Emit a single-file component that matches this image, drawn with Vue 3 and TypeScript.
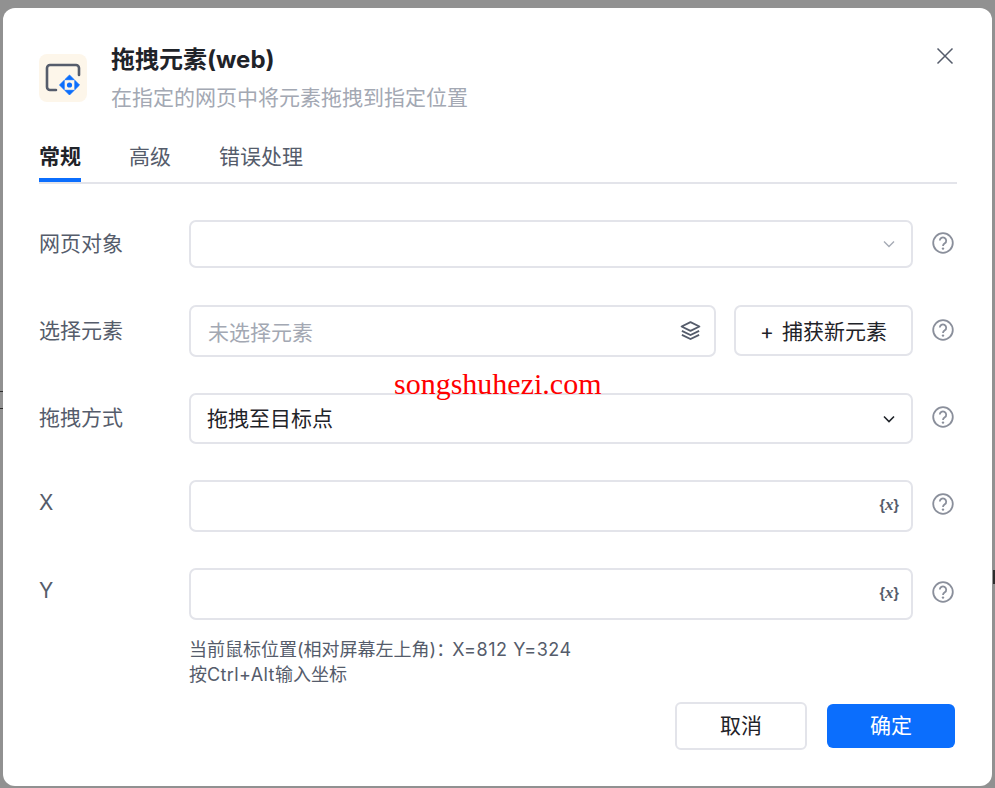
<script setup lang="ts">
import {ref} from 'vue';

// Вкладки диалога
const tabs = ['常规', '高级', '错误处理'];
const activeTab = ref(0);
</script>

<template>
  <div class="page">
    <!-- Обрывки страницы под затемнением -->
    <span class="under under-left"></span>
    <span class="under under-right"></span>

    <div class="dialog">
      <header class="head">
        <div class="logo">
          <svg width="48" height="48" viewBox="0 0 48 48">
            <path d="M17 36h-6a3 3 0 0 1-3-3V14a3 3 0 0 1 3-3h26a3 3 0 0 1 3 3v7" fill="none" stroke="#555c6b" stroke-width="2.6" stroke-linecap="round"/>
            <path d="M30.500 21l4.700 4.700h-9.400zM30.500 41l-4.700-4.700h9.400zM20.500 31l4.700-4.700v9.400zM40.500 31l-4.700 4.700v-9.400z" fill="#0b6efd" stroke="#0b6efd" stroke-width="0.8" stroke-linejoin="round"/>
            <circle cx="30.500" cy="31" r="2.600" fill="#0b6efd"/>
          </svg>
        </div>
        <div class="head-text">
          <div class="title">拖拽元素(web)</div>
          <div class="subtitle">在指定的网页中将元素拖拽到指定位置</div>
        </div>
        <svg class="close" width="18" height="18" viewBox="0 0 18 18">
          <path d="M1.500 1.500l15 15M16.500 1.500l-15 15" stroke="#555c6b" stroke-width="1.500" fill="none"/>
        </svg>
      </header>

      <nav class="tabs">
        <span
            v-for="(tab, i) in tabs"
            :key="tab"
            class="tab"
            :class="{active: i === activeTab}"
            @click="activeTab = i"
        >{{ tab }}</span>
      </nav>

      <div class="form">
        <div class="row row-1">
          <label class="label label-low">网页对象</label>
          <div class="field field-48">
            <svg class="chevron" width="12" height="8" viewBox="0 0 12 8">
              <path d="M1 1.500l5 5 5-5" stroke="#a6abb5" stroke-width="1.400" fill="none"/>
            </svg>
          </div>
          <svg class="help" width="24" height="24" viewBox="0 0 24 24">
            <circle cx="12" cy="12" r="9.800" fill="none" stroke="#8a8f9b" stroke-width="1.800"/>
            <path d="M8.800 9.600a3.200 3.200 0 1 1 5 2.700c-1.200.8-1.800 1.300-1.800 2.600" fill="none" stroke="#8a8f9b" stroke-width="1.800"/>
            <circle cx="12" cy="17.600" r="1.200" fill="#8a8f9b"/>
          </svg>
        </div>

        <div class="row row-2">
          <label class="label label-low">选择元素</label>
          <div class="field field-52 field-select">
            <span class="placeholder">未选择元素</span>
            <svg class="layers" width="21" height="21" viewBox="0 0 20 20">
              <path d="M10 2l8.500 4.200L10 10.400 1.500 6.200z" fill="none" stroke="#555c6b" stroke-width="1.700" stroke-linejoin="round"/>
              <path d="M1.800 10.400l8.200 4 8.200-4M1.800 14.200l8.200 4 8.200-4" fill="none" stroke="#555c6b" stroke-width="1.700"/>
            </svg>
          </div>
          <button class="btn-capture">+ 捕获新元素</button>
          <svg class="help" width="24" height="24" viewBox="0 0 24 24">
            <circle cx="12" cy="12" r="9.800" fill="none" stroke="#8a8f9b" stroke-width="1.800"/>
            <path d="M8.800 9.600a3.200 3.200 0 1 1 5 2.700c-1.200.8-1.800 1.300-1.800 2.600" fill="none" stroke="#8a8f9b" stroke-width="1.800"/>
            <circle cx="12" cy="17.600" r="1.200" fill="#8a8f9b"/>
          </svg>
        </div>

        <div class="row row-3">
          <label class="label">拖拽方式</label>
          <div class="field field-51">
            <span class="value">拖拽至目标点</span>
            <svg class="chevron" width="12" height="8" viewBox="0 0 12 8">
              <path d="M1 1.500l5 5 5-5" stroke="#1f2329" stroke-width="1.600" fill="none"/>
            </svg>
          </div>
          <svg class="help" width="24" height="24" viewBox="0 0 24 24">
            <circle cx="12" cy="12" r="9.800" fill="none" stroke="#8a8f9b" stroke-width="1.800"/>
            <path d="M8.800 9.600a3.200 3.200 0 1 1 5 2.700c-1.200.8-1.800 1.300-1.800 2.600" fill="none" stroke="#8a8f9b" stroke-width="1.800"/>
            <circle cx="12" cy="17.600" r="1.200" fill="#8a8f9b"/>
          </svg>
        </div>

        <div v-for="axis in ['X', 'Y']" :key="axis" class="row row-axis">
          <label class="label label-axis">{{ axis }}</label>
          <div class="field field-52">
            <span class="var-mark">{<i>x</i>}</span>
          </div>
          <svg class="help help-axis" width="24" height="24" viewBox="0 0 24 24">
            <circle cx="12" cy="12" r="9.800" fill="none" stroke="#8a8f9b" stroke-width="1.800"/>
            <path d="M8.800 9.600a3.200 3.200 0 1 1 5 2.700c-1.200.8-1.800 1.300-1.800 2.600" fill="none" stroke="#8a8f9b" stroke-width="1.800"/>
            <circle cx="12" cy="17.600" r="1.200" fill="#8a8f9b"/>
          </svg>
        </div>

        <div class="hint">
          <div>当前鼠标位置(相对屏幕左上角)：<span class="coords">X=812 Y=324</span></div>
          <div>按<span class="keys">Ctrl+Alt</span>输入坐标</div>
        </div>
      </div>

      <footer class="foot">
        <button class="btn btn-cancel">取消</button>
        <button class="btn btn-ok">确定</button>
      </footer>

      <div class="watermark">songshuhezi.com</div>
    </div>
  </div>
</template>

<style>
html,
body {
  margin: 0;
  background: #919191;
}
</style>

<style scoped>
.page {
  position: relative;
  width: 995px;
  height: 788px;
  padding: 8px 3px 2px;
  box-sizing: border-box;
  overflow: hidden;
  font-family: Inter, "Noto Sans CJK SC", sans-serif;
  background: #919191;
}

.under {
  position: absolute;
}

.under-left {
  left: 0;
  top: 391px;
  width: 3px;
  height: 16px;
  border-top: 1px solid #2d2d2d;
  border-bottom: 1px solid #2d2d2d;
}

.under-right {
  right: 0;
  top: 570px;
  width: 2px;
  height: 14px;
  background: #2d2d2d;
}

.dialog {
  position: relative;
  height: 778px;
  box-sizing: border-box;
  padding: 0 35px 0 36px;
  background: #fff;
  border-radius: 12px;
}

/* Шапка */
.head {
  display: flex;
  height: 120px;
  padding-top: 46px;
  box-sizing: border-box;
}

.logo {
  width: 48px;
  height: 48px;
  background: #fdf6ea;
  border-radius: 8px;
}

.head-text {
  margin-left: 24px;
  flex: 1;
  margin-top: -12px;
}

.title {
  font-size: 24px;
  line-height: 36px;
  font-weight: 700;
  color: #1f2329;
}

.subtitle {
  margin-top: 4px;
  font-size: 21px;
  line-height: 32px;
  color: #a3a8b3;
}

.close {
  margin: -7px 3px 0 0;
}

/* Вкладки */
.tabs {
  display: flex;
  gap: 48px;
  height: 54px;
  border-bottom: 2px solid #e3e4ea;
}

.tab {
  height: 54px;
  box-sizing: border-box;
  padding-top: 14px;
  font-size: 21px;
  line-height: 30px;
  color: #555c6b;
  cursor: pointer;
}

.tab.active {
  color: #1f2329;
  font-weight: 700;
  border-bottom: 4px solid #0b6efd;
}

/* Форма */
.form {
  display: flex;
  flex-direction: column;
}

.row {
  display: flex;
  align-items: center;
}

.row-1 {
  margin-top: 36px;
}

.row-2 {
  margin-top: 37px;
}

.row-3,
.row-axis {
  margin-top: 36px;
}

.label {
  width: 150px;
  flex: none;
  padding-bottom: 2px;
  font-size: 21px;
  line-height: 30px;
  color: #555c6b;
}

.label-low {
  padding-bottom: 0;
}

.label-axis {
  align-self: flex-start;
  margin-top: 8px;
}

.field {
  flex: 1;
  display: flex;
  align-items: center;
  justify-content: flex-end;
  box-sizing: border-box;
  padding: 0 16px;
  border: 2px solid #e3e4ea;
  border-radius: 7px;
}

.field-48 {
  height: 48px;
}

.field-51 {
  height: 51px;
}

.field-52 {
  height: 52px;
}

.field-select {
  flex: none;
  width: 527px;
  justify-content: space-between;
  padding-left: 17px;
  padding-right: 13px;
}

.layers {
  margin-bottom: 2px;
}

.value {
  margin: 0 auto 3px 0;
  font-size: 21px;
  color: #1f2329;
}

.placeholder {
  font-size: 21px;
  color: #a3a8b3;
}

.var-mark {
  margin: 0 -4px 3px 0;
  font-family: "Liberation Sans", sans-serif;
  font-size: 14px;
  font-weight: 700;
  color: #555c6b;
}

.var-mark i {
  font-family: "Liberation Serif", serif;
  font-size: 17px;
}

.help {
  flex: none;
  margin: 0 2px 3px 18px;
}

.help-axis {
  margin-bottom: 4px;
}

.btn-capture {
  flex: none;
  width: 179px;
  height: 51px;
  margin: 0 0 1px 18px;
  padding: 0 0 2px;
  font: inherit;
  font-size: 21px;
  word-spacing: 2px;
  color: #1f2329;
  background: #fff;
  border: 2px solid #e3e4ea;
  border-radius: 7px;
}

.hint {
  margin: 17px 0 0 150px;
  font-size: 18px;
  line-height: 25px;
  color: #555c6b;
}

.coords {
  margin-left: -2px;
  letter-spacing: 0.55px;
}

.keys {
  letter-spacing: 0.4px;
}

/* Подвал */
.foot {
  display: flex;
  justify-content: flex-end;
  align-items: center;
  gap: 20px;
  margin: 15px 2px 0 0;
}

.btn {
  padding: 0 0 4px;
  font: inherit;
  font-size: 21px;
  border-radius: 6px;
}

.btn-cancel {
  width: 132px;
  height: 48px;
  color: #1f2329;
  background: #fff;
  border: 2px solid #e3e4ea;
}

.btn-ok {
  width: 128px;
  height: 44px;
  color: #fff;
  background: #0b6efd;
  border: none;
}

.watermark {
  position: absolute;
  left: 391px;
  top: 358px;
  font-family: "Liberation Serif", serif;
  font-size: 30px;
  line-height: 36px;
  color: #f00;
}
</style>
